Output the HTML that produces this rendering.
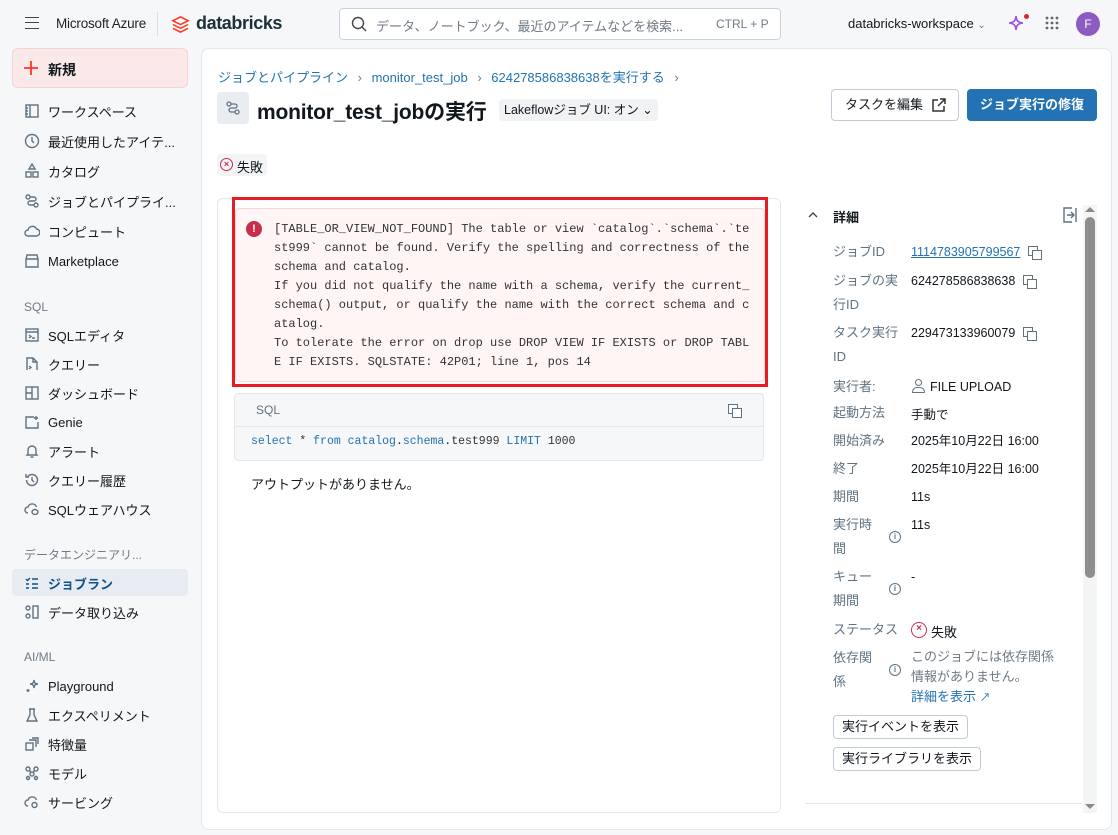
<!DOCTYPE html>
<html><head><meta charset="utf-8"><style>
*{box-sizing:border-box;margin:0;padding:0}
body{width:1118px;height:835px;overflow:hidden;background:#f6f7f9;font-family:"Liberation Sans","Noto Sans CJK JP",sans-serif;font-size:13px;color:#11171c;position:relative}
.abs{position:absolute}
.nav{position:absolute;left:24px;font-size:13px;color:#11171c;display:flex;align-items:center;height:20px}
.nav svg{width:16px;height:16px;margin-right:8px;stroke:#5f7281;fill:none;stroke-width:1.4}
.sec{position:absolute;left:24px;font-size:12px;color:#6f7a85}
.mono{font-family:"Liberation Mono","Noto Sans CJK JP",monospace}
.lab{position:absolute;left:833px;color:#5f7281;font-size:13px;line-height:24px}
.val{position:absolute;left:911px;font-size:12.5px;line-height:24px;color:#11171c;white-space:nowrap}
.cp{display:inline-block;width:13px;height:13px;position:relative;vertical-align:middle;margin-left:8px}
.cp:before{content:"";position:absolute;left:0;top:0;width:8px;height:8px;border:1.5px solid #5f7281;background:#fff}
.cp:after{content:"";position:absolute;left:4px;top:4px;width:8px;height:8px;border:1.5px solid #5f7281;background:#fff}
.info{position:absolute;left:889px;width:12px;height:12px;border:1.4px solid #5f7281;border-radius:50%;font-size:8px;text-align:center;line-height:10px;color:#5f7281;font-weight:bold}
.btn2{position:absolute;left:833px;height:24px;border:1px solid #c0cdd8;border-radius:4px;background:#fff;font-size:13px;padding:0 8px;line-height:22px}
</style></head><body>
<!-- top bar -->
<div class="abs" style="left:25px;top:17px;width:14px;height:12px;border-top:1.6px solid #444;border-bottom:1.6px solid #444"><div style="margin-top:3.6px;border-top:1.6px solid #444"></div></div>
<div class="abs" style="left:56px;top:16px;font-size:13.5px;color:#222;letter-spacing:-0.2px">Microsoft Azure</div>
<div class="abs" style="left:157px;top:12px;height:24px;border-left:1px solid #ddd"></div>
<svg class="abs" style="left:171px;top:15px" width="19" height="19" viewBox="0 0 20 20"><path d="M2 6l8-4 8 4-8 4zM2 10l8 4 8-4M2 14l8 4 8-4" fill="none" stroke="#ff3621" stroke-width="1.6"/></svg>
<div class="abs" style="left:196px;top:13px;font-size:18px;font-weight:bold;color:#1b3139;letter-spacing:-0.4px">databricks</div>
<div class="abs" style="left:339px;top:8px;width:442px;height:32px;border:1px solid #c9d2da;border-radius:4px;background:#fff"></div>
<svg class="abs" style="left:351px;top:16px" width="17" height="17" viewBox="0 0 17 17"><circle cx="7" cy="7" r="5.5" fill="none" stroke="#444" stroke-width="1.4"/><path d="M11 11l4 4" stroke="#444" stroke-width="1.4"/></svg>
<div class="abs" style="left:376px;top:16px;color:#6f7a85;font-size:13px">データ、ノートブック、最近のアイテムなどを検索...</div>
<div class="abs" style="left:716px;top:17px;color:#6f7a85;font-size:12px">CTRL + P</div>
<div class="abs" style="left:848px;top:16px;font-size:13px">databricks-workspace <span style="color:#777;font-size:10px">⌄</span></div>
<svg class="abs" style="left:1008px;top:15px" width="16" height="16" viewBox="0 0 16 16"><path d="M8 1C8.5 6 10 7.5 15 8 10 8.5 8.5 10 8 15 7.5 10 6 8.5 1 8 6 7.5 7.5 6 8 1z" fill="none" stroke="#a04ee0" stroke-width="1.6"/></svg>
<div class="abs" style="left:1024px;top:14px;width:5px;height:5px;border-radius:50%;background:#d9272e"></div>
<svg class="abs" style="left:1045px;top:16px" width="14" height="14"><g fill="#666"><circle cx="2" cy="2" r="1.4"/><circle cx="7" cy="2" r="1.4"/><circle cx="12" cy="2" r="1.4"/><circle cx="2" cy="7" r="1.4"/><circle cx="7" cy="7" r="1.4"/><circle cx="12" cy="7" r="1.4"/><circle cx="2" cy="12" r="1.4"/><circle cx="7" cy="12" r="1.4"/><circle cx="12" cy="12" r="1.4"/></g></svg>
<div class="abs" style="left:1076px;top:12px;width:24px;height:24px;border-radius:50%;background:#8e5bc1;color:#fff;text-align:center;line-height:24px;font-size:12px">F</div>

<!-- sidebar -->
<div class="abs" style="left:12px;top:48px;width:176px;height:40px;background:#fbe9e9;border:1px solid #f3d3d3;border-radius:6px"></div>
<svg class="abs" style="left:23px;top:60px" width="16" height="16"><path d="M8 1v14M1 8h14" stroke="#ff3621" stroke-width="1.8"/></svg>
<div class="abs" style="left:48px;top:60px;font-size:14px;font-weight:bold">新規</div>
<div class="nav" style="top:101px"><svg viewBox="0 0 16 16"><rect x="2" y="2" width="12" height="12"/><path d="M6 2v12M2 5h2M2 8h2M2 11h2"/></svg>ワークスペース</div>
<div class="nav" style="top:131px"><svg viewBox="0 0 16 16"><circle cx="8" cy="8" r="6.5"/><path d="M8 4v4l2 2"/></svg>最近使用したアイテ...</div>
<div class="nav" style="top:161px"><svg viewBox="0 0 16 16"><path d="M8 1l3 5H5z"/><rect x="2" y="9" width="5" height="5"/><rect x="9" y="9" width="5" height="5"/></svg>カタログ</div>
<div class="nav" style="top:191px"><svg viewBox="0 0 16 16"><circle cx="4" cy="4" r="2"/><circle cx="12" cy="12" r="2"/><path d="M6 4h4a2 2 0 010 4H6a2 2 0 000 4h4"/></svg>ジョブとパイプライ...</div>
<div class="nav" style="top:221px"><svg viewBox="0 0 16 16"><path d="M4 13a3 3 0 010-6 4.5 4.5 0 018.5-1A3.5 3.5 0 0112 13z"/></svg>コンピュート</div>
<div class="nav" style="top:251px"><svg viewBox="0 0 16 16"><path d="M2 6l1-4h10l1 4v8H2zM2 6h12"/></svg>Marketplace</div>
<div class="sec" style="top:300px">SQL</div>
<div class="nav" style="top:325px"><svg viewBox="0 0 16 16"><rect x="2" y="2" width="12" height="12"/><path d="M2 5h12M5 8l2 1.5L5 11M8 11h3"/></svg>SQLエディタ</div>
<div class="nav" style="top:354px"><svg viewBox="0 0 16 16"><path d="M3 14V2h6l4 4v8M9 2v4h4M5 10l2 1.5L5 13"/></svg>クエリー</div>
<div class="nav" style="top:383px"><svg viewBox="0 0 16 16"><rect x="2" y="2" width="12" height="12"/><path d="M8 2v12M2 8h6"/></svg>ダッシュボード</div>
<div class="nav" style="top:412px"><svg viewBox="0 0 16 16"><path d="M10 3H2v11h12V8M12 2v4M10 4h4"/></svg>Genie</div>
<div class="nav" style="top:441px"><svg viewBox="0 0 16 16"><path d="M4 11V7a4 4 0 018 0v4l1 1H3zM6.5 14h3"/></svg>アラート</div>
<div class="nav" style="top:470px"><svg viewBox="0 0 16 16"><path d="M2.5 8A5.5 5.5 0 108 2.5 5.5 5.5 0 003.5 5M2 2v3h3M8 5v3l2 2"/></svg>クエリー履歴</div>
<div class="nav" style="top:499px"><svg viewBox="0 0 16 16"><path d="M4 12a3 3 0 010-6 4.5 4.5 0 018.5 0"/><ellipse cx="11" cy="11" rx="3" ry="2.5"/></svg>SQLウェアハウス</div>
<div class="sec" style="top:546px">データエンジニアリ...</div>
<div class="abs" style="left:12px;top:569px;width:176px;height:27px;background:#e6ecf2;border-radius:4px"></div>
<div class="nav" style="top:573px;font-weight:bold;color:#0e538b"><svg viewBox="0 0 16 16" style="stroke:#0e538b"><path d="M2 4l1.5 1.5L6 3M8 4h6M2 9h3M8 9h6M2 13h3M8 13h6"/></svg>ジョブラン</div>
<div class="nav" style="top:602px"><svg viewBox="0 0 16 16"><circle cx="4" cy="4" r="2"/><circle cx="4" cy="12" r="2"/><rect x="9" y="2" width="5" height="12"/></svg>データ取り込み</div>
<div class="sec" style="top:650px">AI/ML</div>
<div class="nav" style="top:676px"><svg viewBox="0 0 16 16"><path d="M10 2c.3 3 1 3.7 4 4-3 .3-3.7 1-4 4-.3-3-1-3.7-4-4 3-.3 3.7-1 4-4zM4 11l0 3M2.5 12.5h3"/></svg>Playground</div>
<div class="nav" style="top:705px"><svg viewBox="0 0 16 16"><path d="M6 2v6l-3 6h10l-3-6V2M5 2h6"/></svg>エクスペリメント</div>
<div class="nav" style="top:734px"><svg viewBox="0 0 16 16"><rect x="2" y="7" width="7" height="7"/><path d="M5 4h7v7M8 2h6v6"/></svg>特徴量</div>
<div class="nav" style="top:763px"><svg viewBox="0 0 16 16"><circle cx="4" cy="4" r="2"/><circle cx="12" cy="4" r="2"/><circle cx="8" cy="9" r="2"/><circle cx="4" cy="13" r="1.5"/><circle cx="12" cy="13" r="1.5"/><path d="M5.5 5.5l1.5 2M10.5 5.5L9 7.5"/></svg>モデル</div>
<div class="nav" style="top:792px"><svg viewBox="0 0 16 16"><path d="M4 12a3 3 0 010-6 4.5 4.5 0 018.5 0"/><circle cx="10.5" cy="11" r="2.5"/></svg>サービング</div>

<!-- main card -->
<div class="abs" style="left:201px;top:48px;width:911px;height:782px;background:#fff;border:1px solid #e4e7eb;border-radius:8px"></div>
<div class="abs" style="left:218px;top:67px;font-size:13px;color:#2272b4">ジョブとパイプライン <span style="color:#6f7a85;margin:0 6px">›</span> monitor_test_job <span style="color:#6f7a85;margin:0 6px">›</span> 624278586838638を実行する <span style="color:#6f7a85;margin:0 6px">›</span></div>
<div class="abs" style="left:217px;top:92px;width:32px;height:32px;background:#e9edf1;border-radius:4px"></div>
<svg class="abs" style="left:225px;top:100px" width="16" height="16" viewBox="0 0 16 16" fill="none" stroke="#5f7281" stroke-width="1.3"><circle cx="4" cy="4" r="2"/><circle cx="12" cy="12" r="2"/><path d="M6 4h4a2 2 0 010 4H6a2 2 0 000 4h4"/></svg>
<div class="abs" style="left:257px;top:96px;font-size:21px;font-weight:bold;letter-spacing:-0.2px">monitor_test_jobの実行</div>
<div class="abs" style="left:499px;top:99px;height:22px;background:#f0f2f4;border-radius:4px;padding:0 5px;font-size:12.5px;line-height:22px">Lakeflowジョブ UI: オン ⌄</div>
<div class="abs" style="left:831px;top:89px;width:128px;height:32px;border:1px solid #c0cdd8;border-radius:4px;font-size:13px;line-height:30px;padding-left:13px">タスクを編集 <svg style="position:absolute;left:100px;top:8px" width="14" height="14" viewBox="0 0 14 14" fill="none" stroke="#333" stroke-width="1.5"><path d="M6 2H1v11h11V8M8 1h5v5M13 1L6 8"/></svg></div>
<div class="abs" style="left:967px;top:89px;width:130px;height:32px;background:#2272b4;border-radius:4px;color:#fff;font-size:13px;font-weight:bold;line-height:32px;text-align:center">ジョブ実行の修復</div>
<div class="abs" style="left:217px;top:154px;width:50px;height:22px;background:#f3f4f6;border-radius:4px"></div>
<div class="abs" style="left:220px;top:158px;width:13px;height:13px;border:1.5px solid #c82d4c;border-radius:50%;color:#c82d4c;font-size:9px;text-align:center;line-height:10px;font-weight:bold">×</div>
<div class="abs" style="left:237px;top:157px;font-size:13px">失敗</div>

<!-- left content -->
<div class="abs" style="left:217px;top:198px;width:564px;height:615px;border:1px solid #e4e7eb;border-radius:6px"></div>
<div class="abs" style="left:235px;top:208px;width:530px;height:174px;background:#fff5f5;border:1px solid #f6d5d8;border-radius:4px"></div>
<div class="abs" style="left:232px;top:197px;width:536px;height:190px;border:3px solid #e51c23"></div>
<div class="abs" style="left:246px;top:221px;width:16px;height:16px;border-radius:50%;background:#c82d4c;color:#fff;font-size:11px;font-weight:bold;text-align:center;line-height:16px">!</div>
<div class="abs mono" style="left:274px;top:220px;width:476px;font-size:12px;line-height:19px;color:#333;white-space:pre">[TABLE_OR_VIEW_NOT_FOUND] The table or view `catalog`.`schema`.`te
st999` cannot be found. Verify the spelling and correctness of the
schema and catalog.
If you did not qualify the name with a schema, verify the current_
schema() output, or qualify the name with the correct schema and c
atalog.
To tolerate the error on drop use DROP VIEW IF EXISTS or DROP TABL
E IF EXISTS. SQLSTATE: 42P01; line 1, pos 14</div>
<div class="abs" style="left:234px;top:393px;width:530px;height:68px;background:#f6f7f9;border:1px solid #e4e7eb;border-radius:4px"></div>
<div class="abs" style="left:235px;top:426px;width:528px;border-top:1px solid #e4e7eb"></div>
<div class="abs" style="left:256px;top:403px;font-size:12px;color:#5f7281">SQL</div>
<span class="cp abs" style="left:728px;top:402px;margin:0"></span>
<div class="abs mono" style="left:251px;top:435px;font-size:11.5px;color:#333"><span style="color:#2272b4">select</span> * <span style="color:#2272b4">from catalog</span>.<span style="color:#2272b4">schema</span>.test999 <span style="color:#2272b4">LIMIT</span> 1000</div>
<div class="abs" style="left:251px;top:474px;font-size:13px">アウトプットがありません。</div>

<!-- right panel -->
<svg class="abs" style="left:808px;top:211px" width="10" height="8"><path d="M1 6l4-4 4 4" fill="none" stroke="#444" stroke-width="1.4"/></svg>
<div class="abs" style="left:833px;top:207px;font-size:13px;font-weight:bold">詳細</div>
<svg class="abs" style="left:1062px;top:207px" width="16" height="16" viewBox="0 0 16 16" fill="none" stroke="#5f7281" stroke-width="1.4"><path d="M14 1v14M10 1H2v14h8M5 8h7M9 5l3 3-3 3"/></svg>
<div class="abs" style="left:1083px;top:205px;width:14px;height:608px;background:#f3f4f6"></div>
<div class="abs" style="left:1085px;top:217px;width:10px;height:361px;background:#8e8e8e;border-radius:5px"></div>
<div class="abs" style="left:1085px;top:207px;width:0;height:0;border:5px solid transparent;border-bottom-color:#888;border-top:none"></div>
<div class="abs" style="left:1085px;top:804px;width:0;height:0;border:5px solid transparent;border-top-color:#888;border-bottom:none"></div>

<div class="lab" style="top:240px">ジョブID</div>
<div class="val" style="top:240px"><span style="color:#2272b4;text-decoration:underline">1114783905799567</span><span class="cp"></span></div>
<div class="lab" style="top:269px;line-height:24px">ジョブの実<br>行ID</div>
<div class="val" style="top:269px">624278586838638<span class="cp"></span></div>
<div class="lab" style="top:321px">タスク実行<br>ID</div>
<div class="val" style="top:321px">229473133960079<span class="cp"></span></div>
<div class="lab" style="top:375px">実行者:</div>
<div class="val" style="top:375px"><span style="display:inline-block;width:15px;height:14px;vertical-align:-2px;position:relative;margin-right:4px"><span style="position:absolute;left:4px;top:0;width:7px;height:7px;border:1.4px solid #5f7281;border-radius:50%"></span><span style="position:absolute;left:1px;top:8px;width:13px;height:6px;border:1.4px solid #5f7281;border-radius:6px 6px 1px 1px"></span></span>FILE UPLOAD</div>
<div class="lab" style="top:401px">起動方法</div>
<div class="val" style="top:403px">手動で</div>
<div class="lab" style="top:429px">開始済み</div>
<div class="val" style="top:429px">2025年10月22日 16:00</div>
<div class="lab" style="top:457px">終了</div>
<div class="val" style="top:457px">2025年10月22日 16:00</div>
<div class="lab" style="top:485px">期間</div>
<div class="val" style="top:485px">11s</div>
<div class="lab" style="top:513px">実行時<br>間</div>
<div class="info" style="top:531px">i</div>
<div class="val" style="top:513px">11s</div>
<div class="lab" style="top:565px">キュー<br>期間</div>
<div class="info" style="top:583px">i</div>
<div class="val" style="top:565px">-</div>
<div class="lab" style="top:618px">ステータス</div>
<div class="abs" style="left:911px;top:622px;width:16px;height:16px;border:1.8px solid #c82d4c;border-radius:50%;color:#c82d4c;font-size:10px;text-align:center;line-height:12px;font-weight:bold">×</div>
<div class="abs" style="left:931px;top:622px;font-size:13px">失敗</div>
<div class="lab" style="top:646px">依存関<br>係</div>
<div class="info" style="top:664px">i</div>
<div class="val" style="top:647px;color:#6f7a85;font-size:13px;line-height:20px">このジョブには依存関係<br>情報がありません。<br><span style="color:#2272b4">詳細を表示 <span style="font-size:11px">↗</span></span></div>
<div class="btn2" style="top:715px">実行イベントを表示</div>
<div class="btn2" style="top:747px">実行ライブラリを表示</div>
<div class="abs" style="left:805px;top:803px;width:277px;border-top:1px solid #e4e7eb"></div>
</body></html>
